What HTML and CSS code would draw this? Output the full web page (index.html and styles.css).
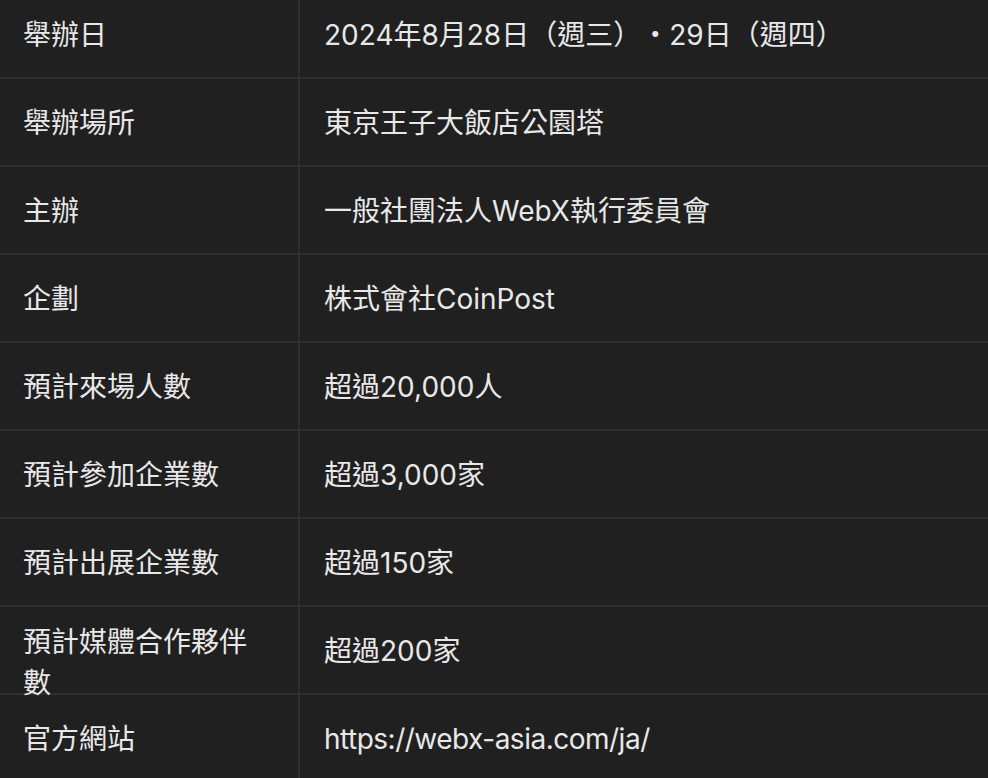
FILE: index.html
```html
<!DOCTYPE html>
<html lang="zh-Hant">
<head>
    <meta charset="UTF-8">
    <meta name="viewport" content="width=device-width, initial-scale=1.0">
    <title>WebX 活動資訊</title>
    <link rel="stylesheet" href="styles.css">
</head>
<body>
    <div class="info-table">
        <div class="info-row">
            <div class="info-label">舉辦日</div>
            <div class="info-value">2024年8月28日（週三）・29日（週四）</div>
        </div>
        <div class="info-row">
            <div class="info-label">舉辦場所</div>
            <div class="info-value">東京王子大飯店公園塔</div>
        </div>
        <div class="info-row">
            <div class="info-label">主辦</div>
            <div class="info-value">一般社團法人WebX執行委員會</div>
        </div>
        <div class="info-row">
            <div class="info-label">企劃</div>
            <div class="info-value">株式會社CoinPost</div>
        </div>
        <div class="info-row">
            <div class="info-label">預計來場人數</div>
            <div class="info-value">超過20,000人</div>
        </div>
        <div class="info-row">
            <div class="info-label">預計參加企業數</div>
            <div class="info-value">超過3,000家</div>
        </div>
        <div class="info-row">
            <div class="info-label">預計出展企業數</div>
            <div class="info-value">超過150家</div>
        </div>
        <div class="info-row">
            <div class="info-label wrap">預計媒體合作夥伴數</div>
            <div class="info-value">超過200家</div>
        </div>
        <div class="info-row">
            <div class="info-label">官方網站</div>
            <div class="info-value link">https://webx-asia.com/ja/</div>
        </div>
    </div>
</body>
</html>
```

FILE: styles.css
```css
* {
    margin: 0;
    padding: 0;
    box-sizing: border-box;
}
body {
    background-color: #202020;
    color: #e8e8e8;
    font-family: 'Inter', 'Noto Sans CJK TC', sans-serif;
    font-size: 28px;
    text-spacing-trim: space-all;
    overflow: hidden;
}
.info-table {
    margin-top: -9px;
    width: 100%;
}
.info-row {
    display: grid;
    grid-template-columns: 300px 1fr;
    height: 88px;
    border-bottom: 2px solid #2f2f2f;
}
.info-label,
.info-value {
    line-height: 41px;
    padding: 24px 24px 0 24px;
}
.info-label {
    padding-left: 23px;
    border-right: 2px solid #2f2f2f;
}
.info-label.wrap {
    padding-top: 15px;
}
.info-value.link {
    letter-spacing: -0.5px;
}
```
